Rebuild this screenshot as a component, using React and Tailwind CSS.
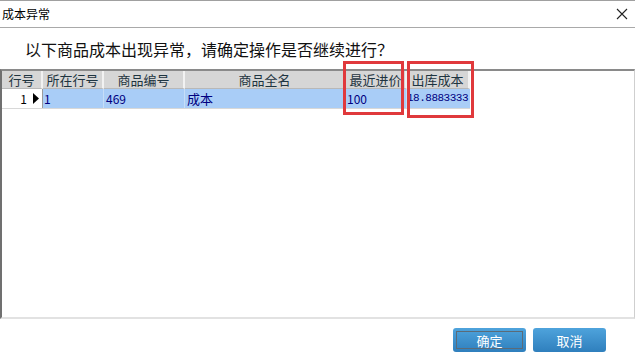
import React from "react";

const cols = [
  { name: "行号", w: 41 },
  { name: "所在行号", w: 61 },
  { name: "商品编号", w: 81 },
  { name: "商品全名", w: 161 },
  { name: "最近进价", w: 61 },
  { name: "出库成本", w: 63 },
];

export default function App() {
  return (
    <div
      className="w-[635px] h-[360px] bg-white flex flex-col text-black overflow-hidden"
      style={{ fontFamily: '"Noto Sans CJK SC", "Noto Sans", sans-serif' }}
    >
      <div className="h-[28px] shrink-0 border-t border-t-[#a0a0a0] border-b border-b-[#a9a9a9] flex items-center justify-between pl-[2px] pr-[4px]">
        <span className="text-[12px] leading-none">成本异常</span>
        <svg width="14" height="14" viewBox="0 0 14 14" className="mr-[2px]">
          <path d="M2 2 L12 12 M12 2 L2 12" stroke="#222" strokeWidth="1.1" />
        </svg>
      </div>

      <div className="h-[41px] shrink-0 flex items-center pl-[25px] text-[16px] leading-none text-[#111]">
        以下商品成本出现异常，请确定操作是否继续进行？
      </div>

      <div className="h-[250px] shrink-0 border-t-2 border-t-[#8a8a8a] border-l-2 border-l-[#707070] border-r border-r-[#cfcfcf] border-b-2 border-b-[#e2e2e2] relative">
        <div className="flex h-[18px]">
          {cols.map((c) => (
            <div
              key={c.name}
              style={{ width: c.w }}
              className="shrink-0 bg-[#d6d6d6] border-r-2 border-r-[#f2f2f2] border-b border-b-[#b8b8b8] flex items-center justify-center text-[13px] leading-none text-[#1e3440]"
            >
              {c.name}
            </div>
          ))}
        </div>
        <div className="flex h-[20px] border-b border-b-[#d8d8d8] w-[468px] text-[12px] leading-none text-[#000080]">
          <div className="w-[41px] shrink-0 bg-white border-r border-r-[#9a9a9a] flex items-center justify-end pr-[3px] gap-[6px] text-black">
            <span>1</span>
            <svg width="6" height="11" viewBox="0 0 6 11">
              <path d="M0 0 L6 5.5 L0 11 Z" fill="#000" />
            </svg>
          </div>
          <div className="w-[61px] shrink-0 bg-[#a9cdf7] border-r border-r-[#c6def8] flex items-center pl-[1px]">1</div>
          <div className="w-[81px] shrink-0 bg-[#a9cdf7] border-r border-r-[#c6def8] flex items-center pl-[2px]">469</div>
          <div className="w-[161px] shrink-0 bg-[#a9cdf7] border-r border-r-[#c6def8] flex items-center pl-[2px] text-[13px]">成本</div>
          <div className="w-[61px] shrink-0 bg-[#a9cdf7] border-r border-r-[#c6def8] flex items-center pl-[1px]">100</div>
          <div
            className="w-[63px] shrink-0 bg-[#a9cdf7] flex items-center whitespace-nowrap text-[11px] tracking-[-0.5px]"
            style={{ fontFamily: '"Liberation Mono", monospace' }}
          >
            18.8883333
          </div>
        </div>
        <div className="absolute left-[341px] top-[-10px] w-[61px] h-[54px] border-[3px] border-[#e0393c]" />
        <div className="absolute left-[405px] top-[-10px] w-[67px] h-[57px] border-[3px] border-[#e0393c]" />
      </div>

      <div className="flex-1 flex justify-end items-start pt-[9px] pr-[29px] gap-[7px]">
        <button className="w-[73px] h-[24px] rounded-[3px] bg-gradient-to-b from-[#4ea3dc] to-[#2f7fbd] flex items-center justify-center p-[3px]">
          <span className="w-full h-full border border-[#5b6b78] flex items-center justify-center text-white text-[13px] leading-none">确定</span>
        </button>
        <button className="w-[73px] h-[24px] rounded-[3px] bg-gradient-to-b from-[#4ea3dc] to-[#2f7fbd] flex items-center justify-center text-white text-[13px] leading-none">
          取消
        </button>
      </div>
    </div>
  );
}
